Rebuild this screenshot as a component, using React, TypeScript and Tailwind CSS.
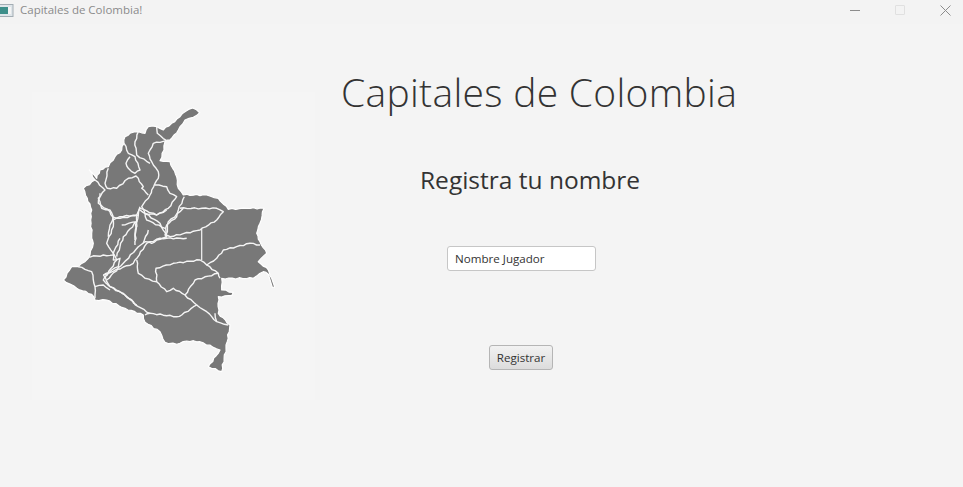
import React from 'react';

type Pt = [number, number];

// traced from the reference at 3x, each group has its own crop origin
const fromTop = (p: number[]): Pt[] => chunk(p).map(([x, y]) => [50 + x / 3, 100 + y / 3]);
const fromBottom = (p: number[]): Pt[] => chunk(p).map(([x, y]) => [50 + x / 3, 235 + y / 3]);
const fromMiddle = (p: number[]): Pt[] => chunk(p).map(([x, y]) => [80 + x / 3, 190 + y / 3]);

function chunk(p: number[]): Pt[] {
  const out: Pt[] = [];
  for (let i = 0; i < p.length; i += 2) out.push([p[i], p[i + 1]]);
  return out;
}

// borders in the picture are hand drawn, so break long segments up and wobble them a bit
function wobble(pts: Pt[], amount = 0.7): Pt[] {
  const out: Pt[] = [];
  for (let i = 0; i < pts.length - 1; i++) {
    const [ax, ay] = pts[i];
    const [bx, by] = pts[i + 1];
    const len = Math.hypot(bx - ax, by - ay);
    const steps = Math.max(1, Math.round(len / 3.5));
    out.push(pts[i]);
    for (let s = 1; s < steps; s++) {
      const t = s / steps;
      const off = Math.sin((ax + ay) * 1.7 + s * 2.3) * amount;
      out.push([ax + (bx - ax) * t - ((by - ay) / len) * off, ay + (by - ay) * t + ((bx - ax) / len) * off]);
    }
  }
  out.push(pts[pts.length - 1]);
  return out;
}

const toPath = (pts: Pt[], close = false) =>
  'M' + pts.map(([x, y]) => `${x.toFixed(1)} ${y.toFixed(1)}`).join('L') + (close ? 'Z' : '');

const outlineStart: Pt[] = [
  ...fromTop([428, 24, 449, 38, 430, 52, 405, 60, 398, 72, 385, 90, 372, 105, 360, 120, 345, 125, 342, 150, 330, 182, 360, 185, 368, 205, 380, 230, 385, 265, 400, 285, 470, 285, 505, 295, 535, 328, 590, 325, 642, 325, 630, 370, 620, 400]),
  ...fromBottom([630, 20, 650, 55, 625, 80, 655, 105, 665, 130]),
];
const tail: Pt[] = fromBottom([665, 130, 674, 156, 667, 157, 655, 118]);
const outlineEnd: Pt[] = [
  ...fromBottom([655, 118, 640, 110, 610, 130, 515, 130, 515, 165, 550, 172, 545, 182, 505, 185, 505, 235, 540, 270, 528, 340, 515, 410, 475, 395, 510, 345, 450, 320, 410, 318, 380, 328, 345, 322, 330, 290, 285, 262, 280, 240, 225, 220, 170, 195, 135, 195, 125, 178, 80, 160, 40, 135, 65, 95, 85, 95, 105, 80, 120, 60, 130, 25, 125, 10]),
  ...fromTop([125, 400, 122, 360, 125, 330, 112, 295, 100, 265, 135, 240, 118, 210, 140, 235, 150, 210, 175, 200, 195, 170, 215, 150, 225, 110, 240, 100, 265, 95, 285, 100, 295, 80, 320, 80, 340, 90, 365, 70, 390, 50, 405, 35, 428, 24]),
];

const borders: Pt[][] = [
  fromTop([320, 80, 322, 100, 350, 122, 310, 130, 295, 160, 305, 185, 325, 215, 325, 235, 315, 250]),
  fromTop([265, 95, 255, 125, 260, 165, 300, 190]),
  fromTop([222, 130, 235, 160, 255, 170, 270, 210, 255, 220, 235, 205, 228, 190, 240, 170]),
  fromTop([175, 205, 165, 250, 172, 265, 200, 265, 235, 235, 258, 228, 280, 260, 275, 265, 295, 285]),
  fromTop([135, 240, 165, 270, 145, 295, 155, 325, 180, 330, 190, 350]),
  fromTop([315, 250, 305, 270, 300, 285, 275, 320, 285, 340, 320, 345, 355, 325, 380, 290, 360, 280, 350, 260, 315, 255]),
  fromTop([403, 290, 385, 330, 380, 350, 350, 375, 345, 405, 360, 410, 450, 390, 500, 360, 520, 335, 500, 325, 390, 325]),
  fromTop([270, 320, 265, 345, 210, 355, 190, 352, 180, 375, 175, 410]),
  fromTop([265, 345, 255, 400, 255, 420]),
  fromTop([285, 340, 290, 360, 345, 385]),
  fromMiddle([60, 10, 55, 40, 90, 65, 100, 90, 100, 110, 80, 160, 100, 190, 110, 210, 70, 270, 90, 290, 130, 310, 170, 345]),
  fromMiddle([100, 90, 120, 80, 170, 75, 180, 55, 230, 75, 260, 60]),
  fromMiddle([180, 60, 240, 100, 260, 140, 230, 150, 215, 160, 195, 155, 175, 170, 130, 220, 80, 270]),
  fromMiddle([125, 105, 170, 95, 130, 140, 110, 200]),
  fromMiddle([170, 75, 165, 165]),
  fromMiddle([205, 120, 190, 160]),
  fromMiddle([258, 145, 265, 95, 300, 65, 310, 55]),
  fromBottom([260, 75, 265, 115, 285, 130, 320, 140, 350, 170, 370, 160, 405, 180, 440, 210, 395, 240, 380, 245, 300, 235, 265, 215, 225, 180, 180, 155]),
  fromBottom([320, 140, 318, 100, 370, 85, 450, 75, 470, 90, 500, 70, 520, 45, 600, 25, 630, 30]),
  fromBottom([405, 180, 435, 135, 505, 115, 470, 90]),
  fromBottom([505, 115, 510, 130]),
  fromBottom([440, 210, 470, 230, 500, 260, 535, 270]),
  fromBottom([495, 235, 500, 260]),
  fromBottom([285, 240, 300, 235]),
  fromBottom([165, 120, 185, 105, 205, 95, 210, 70, 190, 75, 190, 55, 210, 10]),
  fromBottom([110, 65, 190, 60]),
  fromBottom([85, 95, 110, 65]),
  fromBottom([85, 95, 125, 110, 135, 155, 135, 190]),
  fromBottom([135, 155, 160, 150, 180, 165]),
  fromBottom([160, 120, 180, 155]),
  fromBottom([160, 120, 250, 85, 290, 25, 330, 10, 410, 10]),
];

// the straight line between Vichada and Guainia has no wobble
const straight: Pt[] = [...fromTop([455, 385]), ...fromBottom([455, 75])];

const ColombiaMap = () => (
  <svg width="283" height="308" viewBox="32 92 283 308" className="block">
    <path
      d={toPath([...wobble(outlineStart), ...tail, ...wobble(outlineEnd)], true)}
      fill="#787878"
      stroke="#ffffff"
      strokeWidth="1.2"
      strokeLinejoin="round"
    />
    {borders.map((b, i) => (
      <path key={i} d={toPath(wobble(b, 0.6))} fill="none" stroke="#f5f5f5" strokeWidth="1.4" strokeLinejoin="round" />
    ))}
    <path d={toPath(straight)} fill="none" stroke="#f5f5f5" strokeWidth="1.2" />
  </svg>
);

const TitleBar = () => (
  <div className="flex h-[24px] items-center bg-[#f3f3f3]">
    <svg width="14" height="13" viewBox="0 0 14 13" className="shrink-0 -mt-[4px]">
      <rect x="-1" y="0.5" width="14" height="12" fill="#dfe6ea" stroke="#a3adb4" strokeWidth="1" />
      <rect x="0" y="3" width="8" height="7" fill="#3d8f8a" />
      <rect x="8" y="3" width="3" height="7" fill="#f4f4f4" />
    </svg>
    <span className="ml-[6px] -mt-[4px] text-[11.5px] text-[#8b8b8b]">Capitales de Colombia!</span>
    <div className="ml-auto flex items-center -mt-[4px]">
      <div className="h-px w-[10px] bg-[#8c8c8c]" />
      <div className="ml-[35px] h-[10px] w-[10px] rounded-[1px] border border-[#e0e0e0]" />
      <svg width="11" height="11" viewBox="0 0 11 11" className="ml-[35px] mr-[12px]">
        <path d="M0.5 0.5L10.5 10.5M10.5 0.5L0.5 10.5" stroke="#8c8c8c" strokeWidth="1" fill="none" />
      </svg>
    </div>
  </div>
);

export default function App() {
  return (
    <div className="h-[487px] w-[963px] overflow-hidden bg-[#f4f4f4] font-['Open_Sans',sans-serif]">
      <TitleBar />
      <div className="flex">
        <div className="ml-[32px] mt-[68px] h-[308px] w-[283px] bg-[#f5f5f5]">
          <ColombiaMap />
        </div>
        <div className="flex flex-col items-start">
          <h1 className="ml-[26px] mt-[40px] whitespace-nowrap text-[39px] leading-[56px] font-[350] tracking-[0.3px] text-[#333333]">
            Capitales de Colombia
          </h1>
          <h2 className="ml-[105px] mt-[43px] whitespace-nowrap text-[24.5px] leading-[34px] font-normal text-[#333333]">
            Registra tu nombre
          </h2>
          <input
            readOnly
            value="Nombre Jugador"
            className="ml-[132px] mt-[49px] h-[25px] w-[149px] rounded-[3px] border border-[#c6c6c6] bg-white px-[7px] text-[11.6px] text-[#333333] outline-none"
          />
          <button className="ml-[174px] mt-[74px] h-[25px] w-[64px] rounded-[3px] border border-[#b5b5b5] bg-gradient-to-b from-[#f2f2f2] to-[#dcdcdc] text-[11.6px] text-[#333333]">
            Registrar
          </button>
        </div>
      </div>
    </div>
  );
}
